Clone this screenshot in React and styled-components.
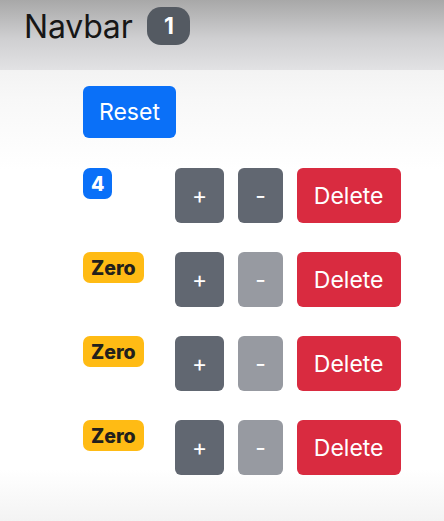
import styled, { createGlobalStyle } from "styled-components";

const GlobalStyle = createGlobalStyle`
  html, body {
    margin: 0;
    padding: 0;
  }
  body {
    font-family: Inter, "Liberation Sans", sans-serif;
    background: linear-gradient(
      to bottom,
      #f3f3f3 70px,
      #f8f8f8 100px,
      #ffffff 170px,
      #ffffff 470px,
      #f3f3f3 521px
    );
    min-height: 521px;
  }
`;

const Nav = styled.nav`
  display: flex;
  align-items: center;
  gap: 15px;
  height: 70px;
  box-sizing: border-box;
  padding: 4px 24px 22px;
  background: linear-gradient(to bottom, #a8a8a8, #cfcfd1 55%, #e2e2e4);
`;

const Brand = styled.span`
  font-size: 32px;
  color: #161616;
  letter-spacing: -0.2px;
`;

const Pill = styled.span`
  display: inline-flex;
  align-items: center;
  justify-content: center;
  width: 43px;
  height: 38px;
  border-radius: 14px;
  background: #545a62;
  color: #fff;
  font-size: 23px;
  font-weight: 700;
`;

const Main = styled.main`
  display: flex;
  flex-direction: column;
  padding: 16px 0 0 83px;
`;

const ResetButton = styled.button`
  align-self: flex-start;
  height: 52px;
  padding: 0 16px;
  border: none;
  border-radius: 6px;
  background: #0a70f8;
  color: #fff;
  font-family: inherit;
  font-size: 23px;
  margin-bottom: 30px;
`;

const Row = styled.div`
  display: flex;
  align-items: flex-start;
  gap: 14px;
  margin-bottom: 29px;
`;

const LabelCell = styled.div`
  width: 78px;
`;

const Badge = styled.span`
  display: inline-flex;
  align-items: center;
  justify-content: center;
  height: 31px;
  padding: 0 8px;
  border-radius: 7px;
  font-size: 19.5px;
  font-weight: 800;
  background: ${(p) => (p.$zero ? "#ffbb14" : "#0a70f8")};
  color: ${(p) => (p.$zero ? "#22201c" : "#fff")};
`;

const tones = {
  secondary: "#616771",
  muted: "#979aa1",
  danger: "#d92b40",
};

const Button = styled.button`
  height: 55px;
  padding: 0 17px;
  border: none;
  border-radius: 6px;
  background: ${(p) => tones[p.$tone]};
  color: #fff;
  font-family: inherit;
  font-size: 23px;
`;

const counters = [4, 0, 0, 0];

export default function App() {
  return (
    <>
      <GlobalStyle />
      <Nav>
        <Brand>Navbar</Brand>
        <Pill>1</Pill>
      </Nav>
      <Main>
        <ResetButton>Reset</ResetButton>
        {counters.map((value, i) => (
          <Row key={i}>
            <LabelCell>
              <Badge $zero={value === 0}>{value === 0 ? "Zero" : value}</Badge>
            </LabelCell>
            <Button $tone="secondary">+</Button>
            <Button $tone={value === 0 ? "muted" : "secondary"}>-</Button>
            <Button $tone="danger">Delete</Button>
          </Row>
        ))}
      </Main>
    </>
  );
}
